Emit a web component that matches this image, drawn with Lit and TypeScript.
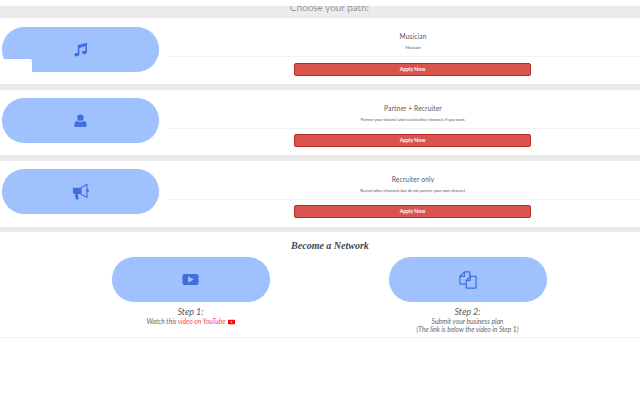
import { LitElement, html, css, svg } from "lit";
import { customElement } from "lit/decorators.js";

const music = svg`<path d="M6 4.5 L17.5 1.5 V13.2 C17.5 14.8 15.6 15.8 14 15.8 C12.4 15.8 11.2 15 11.2 13.8 C11.2 12.4 12.8 11.6 14.2 11.6 C14.9 11.6 15.3 11.7 15.6 11.8 V6 L8 8 V16 C8 17.6 6.1 18.6 4.5 18.6 C2.9 18.6 1.7 17.8 1.7 16.6 C1.7 15.2 3.3 14.4 4.7 14.4 C5.3 14.4 5.7 14.5 6 14.6 Z" fill="currentColor"/>`;
const user = svg`<circle cx="10" cy="5.5" r="4.3" fill="currentColor"/><path d="M3.5 18 C2.6 18 2 17.4 2 16.5 V14 C2 11.6 3.6 10 5.6 9.6 C6.8 10.7 8.3 11.2 10 11.2 C11.7 11.2 13.2 10.7 14.4 9.6 C16.4 10 18 11.6 18 14 V16.5 C18 17.4 17.4 18 16.5 18 Z" fill="currentColor"/>`;
const horn = svg`<path d="M0.5 5.5 H10 V13 H6.2 L7.2 18.4 C7.3 19 7 19.4 6.4 19.4 H4.6 C4.1 19.4 3.8 19.1 3.7 18.7 L2.8 13 C1.3 13 0.5 12.2 0.5 11 Z" fill="currentColor"/><path d="M10 5.5 L17 1.5 V17 L10 13 Z" fill="none" stroke="currentColor" stroke-width="1.3" stroke-linejoin="round"/><path d="M17 7.6 H19 V10.8 H17 Z" fill="currentColor"/>`;
const play = svg`<rect x="0.5" y="1" width="19" height="13" rx="2.6" fill="currentColor"/><path d="M7.2 3.8 L13.8 7.5 L7.2 11.2 Z" fill="#9fc2ff"/>`;
const copy = svg`<g fill="none" stroke="currentColor" stroke-width="1.4" stroke-linejoin="round"><path d="M12 6 V1 H6 L1 6 V13.3 Q1 14.5 2.2 14.5 H8"/><path d="M6 1 V6 H1"/><path d="M12.5 6 H19 V19 H8 V10.5 Z"/><path d="M12.5 6 V10.5 H8"/></g>`;

const ic = (c: unknown, w: number, h: number, vb: string) =>
  html`<svg class="ic" width=${w} height=${h} viewBox=${vb}>${c}</svg>`;

@customElement("app-root")
export class AppRoot extends LitElement {
  static styles = css`
    :host { display: block; width: 640px; height: 403px; overflow: hidden; background: #fff; font-family: Lato, "Liberation Sans", sans-serif; color: #666; padding-top: 6px; box-sizing: border-box; }
    .bar { height: 12px; background: #ebebeb; }
    .bar.thin { height: 6px; }
    .bar.thin3 { height: 5px; }
    .head { overflow: hidden; text-align: center; font-weight: 300; font-size: 10px; line-height: 12px; color: #555; padding-left: 19px; }
    .head span { display: block; margin-top: -5px; }
    .row { display: flex; height: 66px; }
    .row.r2 { height: 65px; }
    .side { width: 168px; flex: none; padding: 8px 0 0 2px; box-sizing: border-box; }
    .r1 .side { padding-top: 9px; }
    .pill { position: relative; width: 158px; height: 45px; border-radius: 23px; background: #9fc2ff; color: #3f6fdd; display: flex; align-items: center; justify-content: center; box-shadow: 0 0 1px #c4d9ff; }
    .side .pill { width: 157.4px; }
    .notch { position: absolute; left: -2px; top: 32px; width: 32px; height: 14px; background: #fff; border-top-right-radius: 2px; }
    .main { flex: 1; display: flex; flex-direction: column; }
    .txt { height: 39px; box-sizing: border-box; padding: 13.5px 0 0 18px; text-align: center; border-bottom: 1px solid #f1f1f1; flex: none; }
    .name { font-size: 6.6px; line-height: 9px; color: #555; letter-spacing: 0.15px; opacity: 0.99; }
    .desc { font-size: 4px; line-height: 6px; color: #555; margin-top: 4.5px; opacity: 0.99; }
    .btn { align-self: flex-start; margin: 5px 0 0 126px; width: 237px; height: 13px; box-sizing: border-box; background: #d9534f; border: 1px solid #b52b27; border-radius: 2px; color: #fff; font-size: 5.2px; font-weight: 700; line-height: 11px; text-align: center; }
    .r1 .btn { margin-top: 6px; }
    .net { text-align: center; font-family: cursive, "Liberation Serif", serif; font-style: italic; font-weight: 700; font-size: 10px; line-height: 14px; color: #3c4653; padding: 7px 0 0 20px; opacity: 0.99; }
    .cols { display: grid; grid-template-columns: 277px 277px; padding: 4px 0 0 52px; height: 85px; box-sizing: border-box; border-bottom: 1px solid #f4f4f4; }
    .col { display: flex; flex-direction: column; align-items: center; }
    .step { font-size: 9px; line-height: 10px; font-style: italic; color: #555; margin-top: 5px; opacity: 0.99; }
    .line { font-size: 6.7px; line-height: 8px; font-style: italic; color: #666; opacity: 0.99; }
    .red { color: #f24a4a; }
    .yt { vertical-align: -1px; margin-left: 2px; }
  `;

  private row(name: string, desc: string, icon: unknown, cls = "", notch = false) {
    return html`<div class="row ${cls}">
      <div class="side"><div class="pill">${icon}${notch ? html`<div class="notch"></div>` : ""}</div></div>
      <div class="main">
        <div class="txt"><div class="name">${name}</div><div class="desc">${desc}</div></div>
        <div class="btn">Apply Now</div>
      </div>
    </div>`;
  }

  render() {
    return html`
      <div class="bar head"><span>Choose your path!</span></div>
      ${this.row("Musician", "Musician", ic(music, 16, 17, "0 0 20 20"), "r1", true)}
      <div class="bar thin"></div>
      ${this.row("Partner + Recruiter", "Partner your channel and recruit other channels if you want.", ic(user, 15, 16, "0 0 20 20"), "r2")}
      <div class="bar thin"></div>
      ${this.row("Recruiter only", "Recruit other channels but do not partner your own channel.", ic(horn, 18, 17, "0 0 20 20"))}
      <div class="bar thin3"></div>
      <div class="net">Become a Network</div>
      <div class="cols">
        <div class="col">
          <div class="pill">${ic(play, 17, 13, "0 0 20 15")}</div>
          <div class="step">Step 1:</div>
          <div class="line">Watch this <span class="red">video on YouTube</span><svg class="yt" width="7" height="6" viewBox="0 0 20 15"><rect x="0" y="1" width="20" height="13" rx="3" fill="#f00"/><path d="M8 4.5 L13 7.5 L8 10.5Z" fill="#fff"/></svg></div>
        </div>
        <div class="col">
          <div class="pill">${ic(copy, 18, 18, "0 0 20 20")}</div>
          <div class="step">Step 2:</div>
          <div class="line">Submit your business plan</div>
          <div class="line">(The link is below the video in Step 1)</div>
        </div>
      </div>
    `;
  }
}
